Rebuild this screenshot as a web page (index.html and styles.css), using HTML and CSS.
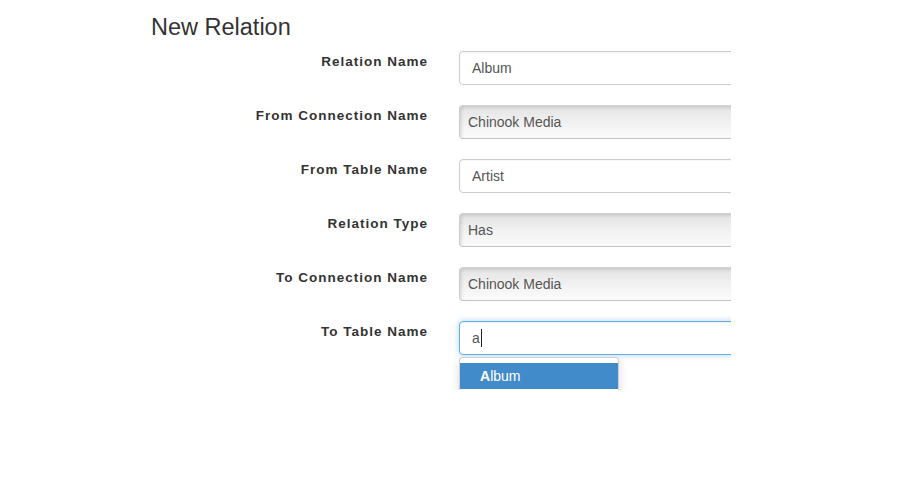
FILE: index.html
```html
<!DOCTYPE html>
<html>
<head>
<meta charset="utf-8">
<link rel="stylesheet" href="styles.css">
</head>
<body>
<div class="viewport">
  <h2 class="title">New Relation</h2>
  <div class="form">
    <div class="row">
      <div class="label">Relation Name</div>
      <div class="field"><div class="input">Album</div></div>
    </div>
    <div class="row">
      <div class="label">From Connection Name</div>
      <div class="field"><div class="select">Chinook Media</div></div>
    </div>
    <div class="row">
      <div class="label">From Table Name</div>
      <div class="field"><div class="input">Artist</div></div>
    </div>
    <div class="row">
      <div class="label">Relation Type</div>
      <div class="field"><div class="select">Has</div></div>
    </div>
    <div class="row">
      <div class="label">To Connection Name</div>
      <div class="field"><div class="select">Chinook Media</div></div>
    </div>
    <div class="row">
      <div class="label">To Table Name</div>
      <div class="field">
        <div class="input focused">a<span class="caret"></span></div>
        <ul class="typeahead">
          <li class="active"><strong>A</strong>lbum</li>
        </ul>
      </div>
    </div>
  </div>
</div>
</body>
</html>
```
FILE: styles.css
```css
html, body {
  margin: 0;
  padding: 0;
  background: #fff;
}
body {
  font-family: "Liberation Sans", Arial, sans-serif;
  color: #333;
}
.viewport {
  position: relative;
  width: 731px;
  height: 390px;
  overflow: hidden;
}
.title {
  margin: 0;
  padding: 14px 0 0 151px;
  font-size: 23.5px;
  line-height: 26px;
  font-weight: normal;
  color: #333;
}
.form {
  margin-top: 11px;
  padding-left: 151px;
  display: flex;
  flex-direction: column;
  gap: 20px;
}
.row {
  display: flex;
  gap: 31px;
}
.label {
  width: 277px;
  flex: none;
  padding-top: 1px;
  text-align: right;
  font-size: 13.5px;
  font-weight: bold;
  line-height: 20px;
  letter-spacing: 1px;
  color: #333;
}
.field {
  position: relative;
  width: 420px;
  flex: none;
}
.input, .select {
  box-sizing: border-box;
  height: 34px;
  border: 1px solid #ccc;
  border-radius: 4px;
  font-size: 14px;
  line-height: 32px;
  color: #555;
  white-space: nowrap;
}
.input {
  padding: 0 12px;
  background: #fff;
  box-shadow: inset 0 1px 1px rgba(0,0,0,0.04);
}
.select {
  padding: 0 8px;
  border-color: #d0d0d0 #ccc #c4c4c4 #ccc;
  background: linear-gradient(#e3e3e3, #f2f2f2 55%, #fbfbfb);
  box-shadow: inset 2px 2px 3px rgba(0,0,0,0.10);
}
.focused {
  border-color: #66afe9;
  box-shadow: inset 0 1px 1px rgba(0,0,0,0.075), 0 0 6px rgba(102,175,233,0.5);
}
.caret {
  display: inline-block;
  width: 1px;
  height: 18px;
  background: #222;
  vertical-align: -4px;
  margin-left: 1px;
}
.typeahead {
  position: absolute;
  top: 36px;
  left: 0;
  box-sizing: border-box;
  width: 160px;
  margin: 0;
  padding: 5px 0 30px;
  list-style: none;
  background: #fff;
  border: 1px solid rgba(0,0,0,0.18);
  border-radius: 4px;
  box-shadow: 0 4px 10px rgba(0,0,0,0.15);
}
.typeahead li {
  padding: 0 20px;
  font-size: 14px;
  line-height: 26px;
  color: #333;
}
.typeahead li.active {
  background: #428bca;
  color: #fff;
}
```
